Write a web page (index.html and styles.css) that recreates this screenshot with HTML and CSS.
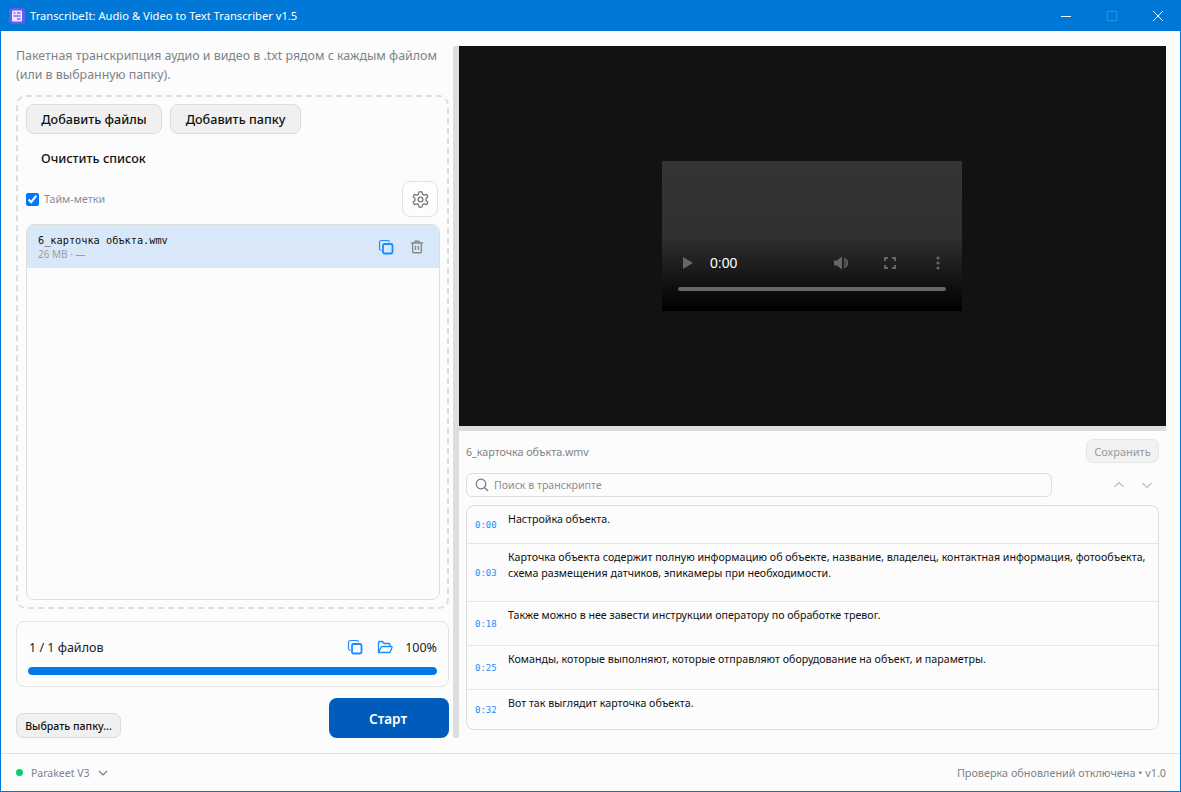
FILE: index.html
```html
<!DOCTYPE html>
<html lang="ru">
<head>
    <meta charset="UTF-8">
    <title>TranscribeIt: Audio &amp; Video to Text Transcriber v1.5</title>
    <link rel="stylesheet" href="styles.css">
</head>
<body>
    <div class="window">
        <header class="titlebar">
            <svg class="app-icon" width="16" height="16" viewBox="0 0 16 16">
                <rect width="16" height="16" rx="3.500" fill="#5f5ff2"/>
                <rect x="3" y="2.500" width="10" height="11" rx="1" fill="#ece8ff"/>
                <path d="M4.500 5h2M8 5h3.500M4.500 8h7M8 11h3.500" stroke="#7a6cf0" stroke-width="1.300"/>
            </svg>
            <span class="title">TranscribeIt: Audio &amp; Video to Text Transcriber v1.5</span>
            <div class="win-controls">
                <span class="win-btn">
                    <svg width="10" height="10" viewBox="0 0 10 10"><path d="M0 5.500h10" stroke="#fff"/></svg>
                </span>
                <span class="win-btn">
                    <svg width="10" height="10" viewBox="0 0 10 10"><rect x=".5" y=".5" width="9" height="9" fill="none" stroke="#1f93e0"/></svg>
                </span>
                <span class="win-btn">
                    <svg width="10" height="10" viewBox="0 0 10 10"><path d="M0 0l10 10M10 0L0 10" stroke="#fff"/></svg>
                </span>
            </div>
        </header>

        <main class="main">
            <section class="left">
                <p class="intro">Пакетная транскрипция аудио и видео в .txt рядом с каждым файлом (или в выбранную папку).</p>

                <div class="dropzone">
                    <div class="btn-row">
                        <button class="btn btn-add-files">Добавить файлы</button>
                        <button class="btn btn-add-folder">Добавить папку</button>
                    </div>
                    <button class="btn-flat">Очистить список</button>
                    <div class="options-row">
                        <label class="check"><input type="checkbox" checked>Тайм-метки</label>
                        <button class="gear-btn">
                            <svg width="19" height="19" viewBox="0 0 24 24" fill="none" stroke="#7a7a7a" stroke-width="1.700" stroke-linejoin="round">
                                <path d="M12.220 2h-.44a2 2 0 0 0-2 2v.18a2 2 0 0 1-1 1.730l-.43.25a2 2 0 0 1-2 0l-.15-.08a2 2 0 0 0-2.730.73l-.22.38a2 2 0 0 0 .73 2.730l.15.1a2 2 0 0 1 1 1.720v.51a2 2 0 0 1-1 1.740l-.15.09a2 2 0 0 0-.73 2.730l.22.38a2 2 0 0 0 2.730.73l.15-.08a2 2 0 0 1 2 0l.43.25a2 2 0 0 1 1 1.730V20a2 2 0 0 0 2 2h.44a2 2 0 0 0 2-2v-.18a2 2 0 0 1 1-1.730l.43-.25a2 2 0 0 1 2 0l.15.08a2 2 0 0 0 2.730-.73l.22-.39a2 2 0 0 0-.73-2.730l-.15-.08a2 2 0 0 1-1-1.740v-.5a2 2 0 0 1 1-1.740l.15-.09a2 2 0 0 0 .73-2.730l-.22-.38a2 2 0 0 0-2.730-.73l-.15.08a2 2 0 0 1-2 0l-.43-.25a2 2 0 0 1-1-1.730V4a2 2 0 0 0-2-2z"/>
                                <circle cx="12" cy="12" r="3"/>
                            </svg>
                        </button>
                    </div>
                    <div class="file-list">
                        <div class="file-item">
                            <div class="file-info">
                                <div class="file-name">6_карточка объкта.wmv</div>
                                <div class="file-meta">26 MB · —</div>
                            </div>
                            <svg class="file-copy" width="16" height="16" viewBox="0 0 16 16" fill="none" stroke="#1a8cff" stroke-width="1.200">
                                <rect x="5" y="5" width="9.500" height="9.500" rx="1.500" stroke-width="1.800"/>
                                <path d="M3.500 11.500c-1.200-.1-2-.9-2-2V3.500c0-1.200.8-2 2-2h6c1.100 0 1.900.7 2 1.800"/>
                            </svg>
                            <svg class="file-trash" width="14" height="14" viewBox="0 0 16 16" fill="none" stroke="#85898e" stroke-width="1.600">
                                <path d="M1 3.500h14M5.500 3.500V2c0-.4.200-.6.600-.6h3.800c.4 0 .6.200.6.600v1.500M3 3.500v10c0 .7.400 1.100 1.100 1.100h7.800c.7 0 1.100-.4 1.100-1.100v-10M6.300 6.500v5M9.700 6.500v5"/>
                            </svg>
                        </div>
                    </div>
                </div>

                <div class="progress-card">
                    <div class="progress-top">
                        <span class="progress-label">1 / 1 файлов</span>
                        <svg class="progress-copy" width="16" height="16" viewBox="0 0 16 16" fill="none" stroke="#1a8cff" stroke-width="1.200">
                            <rect x="5" y="5" width="9.500" height="9.500" rx="1.500" stroke-width="1.800"/>
                            <path d="M3.500 11.500c-1.200-.1-2-.9-2-2V3.500c0-1.200.8-2 2-2h6c1.100 0 1.900.7 2 1.800"/>
                        </svg>
                        <svg class="progress-folder" width="16" height="16" viewBox="0 0 16 16" fill="none" stroke="#1a8cff" stroke-width="1.300" stroke-linejoin="round">
                            <path d="M1.500 13V3.500c0-.6.400-1 1-1h3l1.500 2h5c.6 0 1 .4 1 1v1.500"/>
                            <path d="M1.500 13.500h10.800c.5 0 .8-.2 1-.7l1.700-4.300c.2-.6 0-1-.6-1H5c-.5 0-.8.200-1 .7l-2.500 5.300z"/>
                        </svg>
                        <span class="progress-pct">100%</span>
                    </div>
                    <div class="progress-bar"><div class="progress-fill"></div></div>
                </div>

                <div class="actions">
                    <button class="btn btn-small">Выбрать папку...</button>
                    <button class="btn-start">Старт</button>
                </div>
            </section>

            <div class="splitter-v"></div>

            <section class="right">
                <div class="video-area">
                    <div class="video">
                        <div class="video-controls">
                            <svg width="12" height="14" viewBox="0 0 12 14"><path d="M1 1l10 6-10 6z" fill="#666"/></svg>
                            <span class="video-time">0:00</span>
                            <svg class="video-vol" width="16" height="16" viewBox="0 0 16 16" fill="#666">
                                <path d="M0 5.500h3L8 1.500v13l-5-4H0z"/>
                                <path d="M10 3.500c2 .8 3.500 2.400 3.500 4.500s-1.500 3.700-3.500 4.500M10 6c.9.400 1.300 1.100 1.300 2s-.4 1.600-1.300 2" fill="none" stroke="#666" stroke-width="1.400"/>
                            </svg>
                            <svg class="video-full" width="12" height="12" viewBox="0 0 12 12" fill="none" stroke="#666" stroke-width="2">
                                <path d="M1 4V1h3M8 1h3v3M11 8v3H8M4 11H1V8"/>
                            </svg>
                            <svg class="video-more" width="4" height="14" viewBox="0 0 4 14" fill="#666">
                                <circle cx="2" cy="2" r="1.600"/><circle cx="2" cy="7" r="1.600"/><circle cx="2" cy="12" r="1.600"/>
                            </svg>
                        </div>
                        <div class="video-track"></div>
                    </div>
                </div>

                <div class="splitter-h"></div>

                <div class="transcript">
                    <div class="transcript-head">
                        <span class="transcript-file">6_карточка объкта.wmv</span>
                        <button class="btn-save">Сохранить</button>
                    </div>
                    <div class="search-row">
                        <div class="search">
                            <svg width="14" height="14" viewBox="0 0 14 14" fill="none" stroke="#777" stroke-width="1.200">
                                <circle cx="6" cy="6" r="4.800"/><path d="M9.500 9.500L13 13"/>
                            </svg>
                            <span>Поиск в транскрипте</span>
                        </div>
                        <svg class="search-up" width="12" height="12" viewBox="0 0 12 12" fill="none" stroke="#bcbcbc" stroke-width="1.100"><path d="M1.500 8L6 3.500 10.500 8"/></svg>
                        <svg class="search-down" width="12" height="12" viewBox="0 0 12 12" fill="none" stroke="#bcbcbc" stroke-width="1.100"><path d="M1.500 4L6 8.500 10.500 4"/></svg>
                    </div>
                    <div class="segments">
                        <div class="segment segment-first">
                            <span class="stamp">0:00</span>
                            <p>Настройка объекта.</p>
                        </div>
                        <div class="segment segment-long">
                            <span class="stamp">0:03</span>
                            <p>Карточка объекта содержит полную информацию об объекте, название, владелец, контактная информация, фотообъекта, схема размещения датчиков, эпикамеры при необходимости.</p>
                        </div>
                        <div class="segment">
                            <span class="stamp">0:18</span>
                            <p>Также можно в нее завести инструкции оператору по обработке тревог.</p>
                        </div>
                        <div class="segment">
                            <span class="stamp">0:25</span>
                            <p>Команды, которые выполняют, которые отправляют оборудование на объект, и параметры.</p>
                        </div>
                        <div class="segment segment-last">
                            <span class="stamp">0:32</span>
                            <p>Вот так выглядит карточка объекта.</p>
                        </div>
                    </div>
                </div>
            </section>
        </main>

        <footer class="statusbar">
            <span class="dot"></span>
            <span class="model">Parakeet V3</span>
            <svg width="10" height="10" viewBox="0 0 10 10" fill="none" stroke="#777" stroke-width="1.100"><path d="M1 3l4 4 4-4"/></svg>
            <span class="update">Проверка обновлений отключена • v1.0</span>
        </footer>
    </div>
</body>
</html>
```

FILE: styles.css
```css
* {
    box-sizing: border-box;
}
body {
    margin: 0;
    font-family: "Noto Sans", sans-serif;
    background: #fcfcfc;
    overflow: hidden;
}
button {
    font-family: inherit;
    cursor: pointer;
}
p {
    margin: 0;
}
svg {
    display: block;
    flex-shrink: 0;
}
.window {
    width: 1181px;
    height: 792px;
    display: flex;
    flex-direction: column;
    border: 1px solid #0078d7;
    border-top: 0;
    background: #fcfcfc;
}
.titlebar {
    height: 31px;
    margin: 0 -1px;
    padding-left: 9px;
    display: flex;
    align-items: center;
    background: #0078d7;
    color: #fff;
    font-size: 11.200px;
}
.title {
    margin-left: 5px;
}
.win-controls {
    margin-left: auto;
    display: flex;
}
.win-btn {
    width: 46px;
    height: 30px;
    display: flex;
    align-items: center;
    justify-content: center;
}

/* main area */
.main {
    flex: 1;
    min-height: 0;
    display: flex;
    padding: 15px 14px 15px 15px;
}
.left {
    width: 433px;
    display: flex;
    flex-direction: column;
}
.intro {
    font-size: 12.400px;
    line-height: 19px;
    color: #7d8388;
    margin-bottom: 11px;
    height: 38px;
}
.dropzone {
    height: 514px;
    padding: 7px 7px 8px 8px;
    border: 2px dashed #dedede;
    border-radius: 10px;
}
.btn-row {
    display: flex;
    gap: 8px;
}
.btn {
    height: 30px;
    padding: 0;
    border: 1px solid #dcdcdc;
    border-radius: 8px;
    background: #f0f0f0;
    color: #111;
    font-size: 12.600px;
    font-weight: 500;
}
.btn-add-files {
    width: 136px;
}
.btn-add-folder {
    width: 131px;
}
.btn-flat {
    display: block;
    height: 30px;
    margin: 9px 0 8px;
    padding: 0 15px;
    border: 0;
    background: none;
    color: #111;
    font-size: 12.600px;
    font-weight: 500;
}
.options-row {
    display: flex;
    align-items: center;
    justify-content: space-between;
    padding-right: 2px;
    margin-bottom: 7px;
}
.check {
    display: flex;
    align-items: center;
    font-size: 10.700px;
    color: #8a8f94;
}
.check input {
    margin: 0 5px 0 0;
}
.gear-btn {
    width: 36px;
    height: 36px;
    padding: 0;
    display: flex;
    align-items: center;
    justify-content: center;
    border: 1px solid #e2e2e2;
    border-radius: 8px;
    background: #fdfdfd;
}
.file-list {
    height: 376px;
    border: 1px solid #dedede;
    border-radius: 8px;
    overflow: hidden;
}
.file-item {
    height: 43px;
    padding: 0 15px 0 11px;
    display: flex;
    align-items: center;
    background: #d9e8f8;
}
.file-info {
    flex: 1;
    padding-top: 1px;
}
.file-name {
    font-family: "DejaVu Sans Mono", monospace;
    font-size: 10.280px;
    line-height: 15px;
    color: #111;
}
.file-meta {
    font-size: 10px;
    line-height: 13px;
    color: #9a9fa4;
}
.file-copy {
    margin-right: 16px;
}
.progress-card {
    height: 66px;
    margin-top: 12px;
    padding: 0 11px;
    border: 1px solid #e4e4e4;
    border-radius: 8px;
}
.progress-top {
    display: flex;
    align-items: center;
    height: 45px;
    padding-top: 5px;
    font-size: 12.500px;
    color: #222;
}
.progress-label {
    flex: 1;
    padding-left: 1px;
}
.progress-folder {
    margin-left: 14px;
}
.progress-pct {
    margin-left: 12px;
}
.progress-bar {
    height: 8px;
    border-radius: 4px;
    background: #e6e6e6;
    overflow: hidden;
}
.progress-fill {
    height: 100%;
    background: #0078e7;
    border-radius: 4px;
}
.actions {
    display: flex;
    align-items: flex-end;
    justify-content: space-between;
    margin-top: 11px;
}
.btn-small {
    width: 105px;
    height: 25px;
    font-size: 10.600px;
    border-radius: 7px;
}
.btn-start {
    width: 120px;
    height: 40px;
    padding: 1px 2px 0 0;
    border: 0;
    border-radius: 8px;
    background: #005cba;
    color: #fff;
    font-size: 13.500px;
    font-weight: 600;
}

/* splitters */
.splitter-v {
    width: 6px;
    margin-left: 4px;
    background: #dedede;
}
.right {
    flex: 1;
    min-width: 0;
    display: flex;
    flex-direction: column;
}
.video-area {
    height: 380px;
    padding-right: 1px;
    display: flex;
    align-items: center;
    justify-content: center;
    background: #121212;
}
.video {
    width: 300px;
    height: 150px;
    display: flex;
    flex-direction: column;
    justify-content: flex-end;
    background: linear-gradient(#343434 0, #303030 50%, #000 100%);
}
.video-controls {
    height: 30px;
    display: flex;
    align-items: center;
    padding: 0 22px 0 20px;
    color: #fff;
}
.video-time {
    margin-left: 16px;
    font-family: "Liberation Sans", sans-serif;
    font-size: 14px;
}
.video-vol {
    margin-left: auto;
}
.video-full {
    margin-left: 34px;
}
.video-more {
    margin-left: 40px;
}
.video-track {
    height: 4px;
    margin: 9px 16px 20px;
    border-radius: 2px;
    background: #666;
}
.splitter-h {
    height: 5px;
    background: #dedede;
}

/* transcript */
.transcript {
    flex: 1;
    min-height: 0;
    padding: 8px 7px 0;
    display: flex;
    flex-direction: column;
}
.transcript-head {
    height: 24px;
    display: flex;
    align-items: center;
    justify-content: space-between;
}
.transcript-file {
    padding-top: 2px;
    font-size: 10.700px;
    color: #7d8388;
}
.btn-save {
    width: 73px;
    height: 24px;
    padding: 0;
    border: 1px solid #e6e6e6;
    border-radius: 7px;
    background: #f2f2f2;
    color: #9a9a9a;
    font-size: 11px;
}
.search-row {
    display: flex;
    align-items: center;
    margin-top: 10px;
}
.search {
    width: 586px;
    height: 24px;
    padding: 0 8px;
    display: flex;
    align-items: center;
    gap: 5px;
    border: 1px solid #dedede;
    border-radius: 6px;
    font-size: 10.600px;
    color: #8a8f94;
}
.search-up {
    margin-left: 61px;
}
.search-down {
    margin-left: 16px;
}
.segments {
    height: 225px;
    margin-top: 8px;
    border: 1px solid #dedede;
    border-radius: 8px;
    overflow: hidden;
}
.segment {
    display: flex;
    align-items: center;
    padding: 0 8px;
    border-bottom: 1px solid #e6e6e6;
}
.segment p {
    padding: 5px 0 22px;
    font-size: 10.660px;
    line-height: 16px;
    color: #111;
}
.segment-first p {
    padding-bottom: 16px;
}
.segment-long p {
    padding-bottom: 20px;
}
.segment-last {
    border-bottom: 0;
}
.segment-last p {
    padding-bottom: 18px;
}
.stamp {
    width: 33px;
    flex-shrink: 0;
    font-family: "DejaVu Sans Mono", monospace;
    font-size: 9px;
    color: #1a8cff;
}

/* status bar */
.statusbar {
    height: 38px;
    padding: 0 14px 0 15px;
    display: flex;
    align-items: center;
    border-top: 1px solid #e2e2e2;
    font-size: 10.850px;
    color: #7d8388;
}
.dot {
    width: 7px;
    height: 7px;
    border-radius: 50%;
    background: #00d667;
}
.model {
    margin: 0 8px;
    font-size: 10.500px;
}
.update {
    margin-left: auto;
}
```
